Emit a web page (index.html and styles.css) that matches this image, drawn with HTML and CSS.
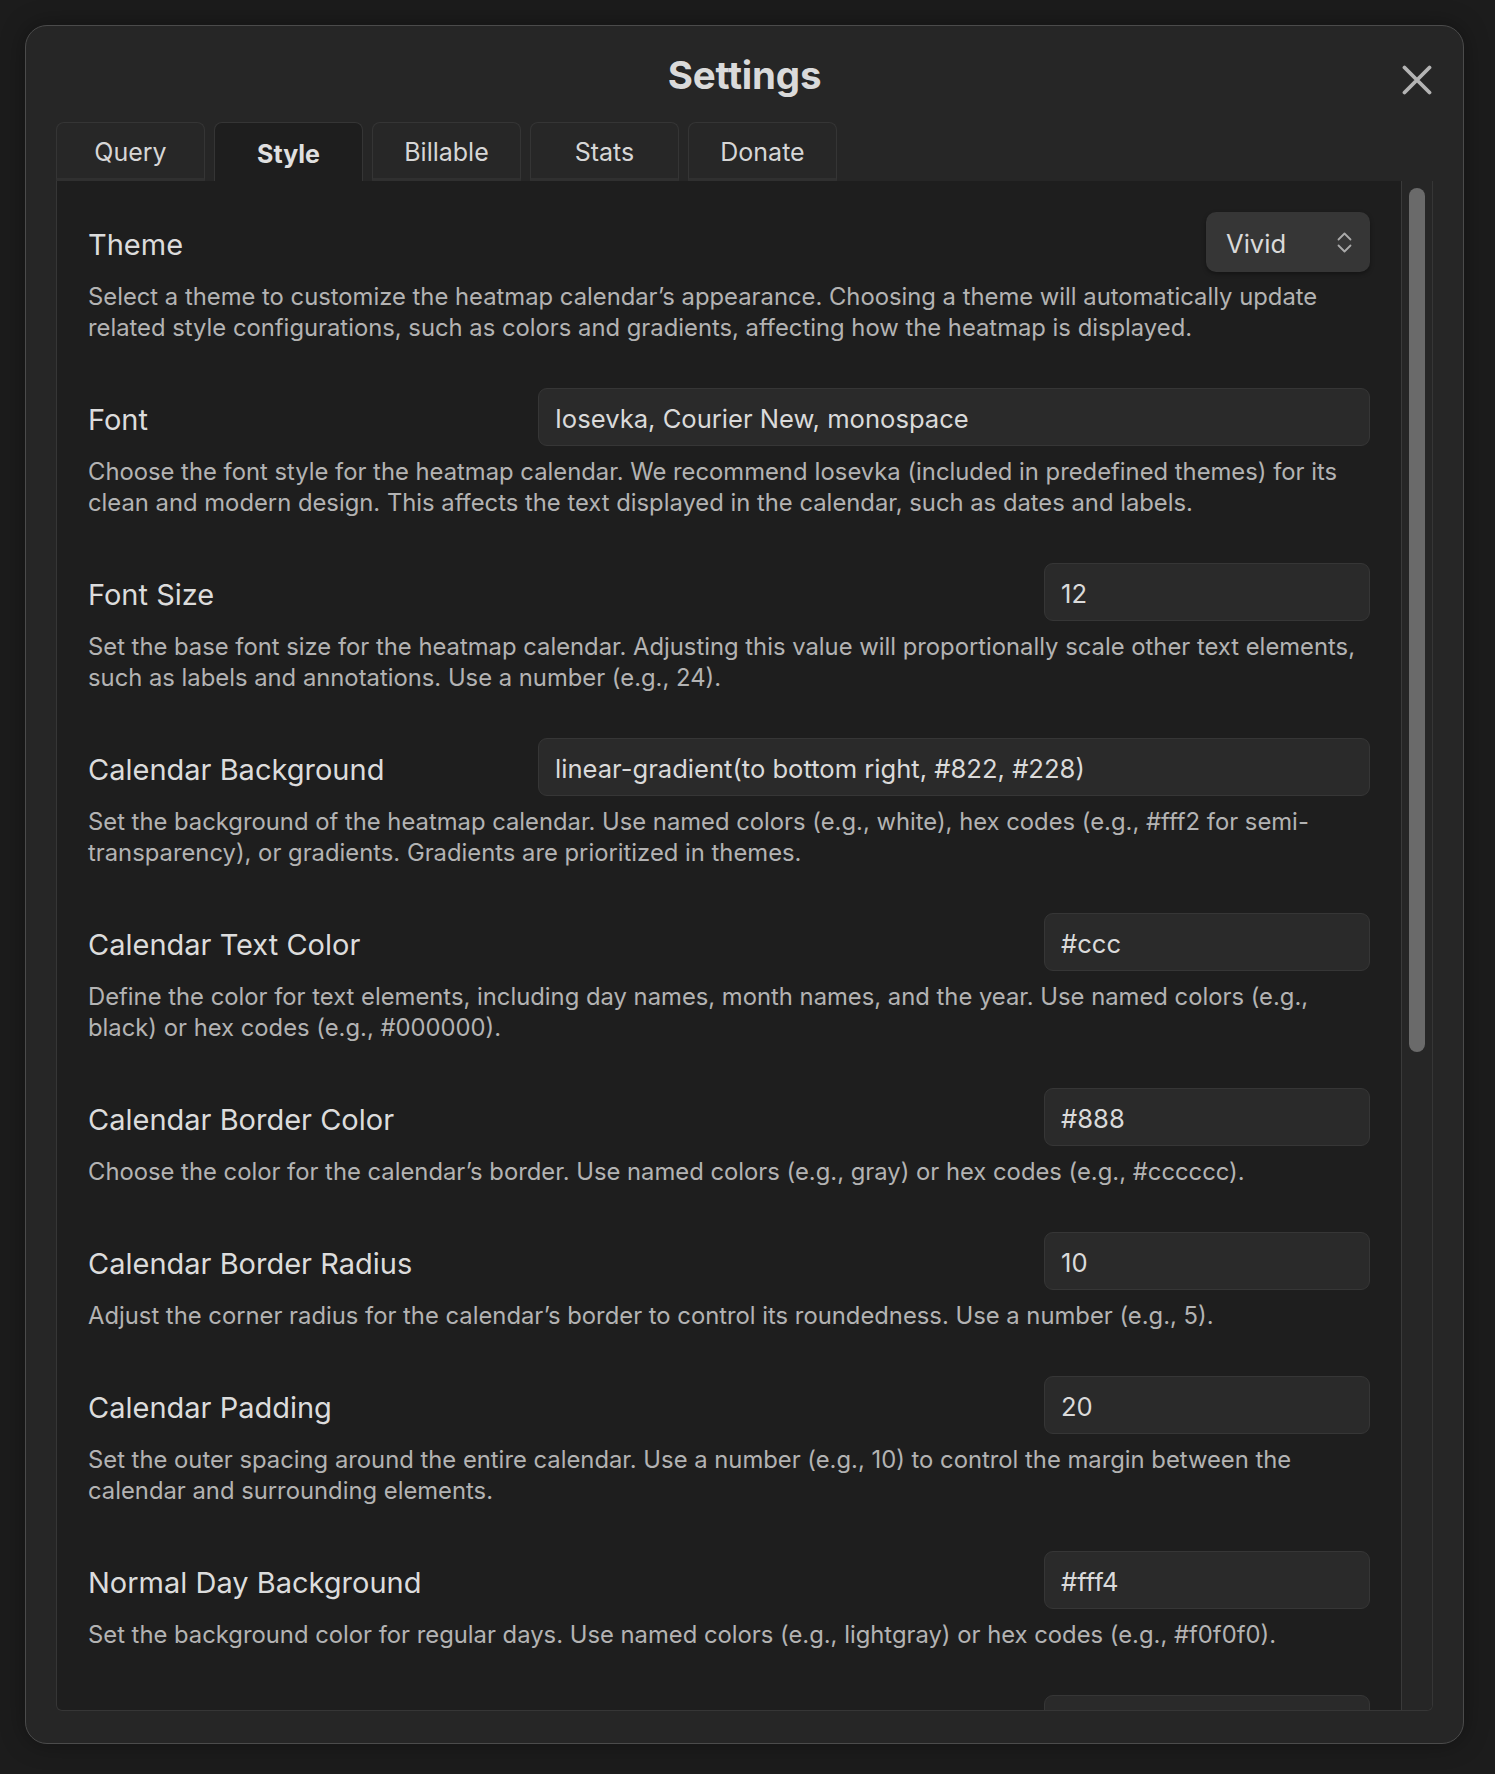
FILE: index.html
```html
<!DOCTYPE html>
<html lang="en">
<head>
<meta charset="utf-8">
<title>Settings</title>
<link rel="stylesheet" href="styles.css">
</head>
<body>
<div class="page">
  <div class="modal">
    <div class="modal-header">
      <div></div>
      <h1 class="modal-title">Settings</h1>
      <button class="close" aria-label="Close">
        <svg width="30" height="30" viewBox="0 0 30 30"><path d="M2.5 2.5 L27.5 27.5 M27.5 2.5 L2.5 27.5" stroke="#b4b4b4" stroke-width="3.8" stroke-linecap="round" fill="none"/></svg>
      </button>
    </div>
    <div class="tabs">
      <div class="tab">Query</div>
      <div class="tab active">Style</div>
      <div class="tab">Billable</div>
      <div class="tab">Stats</div>
      <div class="tab">Donate</div>
    </div>
    <div class="panel">
      <div class="panel-content">
        <div class="setting">
          <div class="setting-row">
            <div class="setting-name">Theme</div>
            <div class="dropdown">
              <span>Vivid</span>
              <svg width="15" height="21" viewBox="0 0 15 21"><path d="M1.5 7.5 L7.5 1.5 L13.5 7.5 M1.5 13.5 L7.5 19.5 L13.5 13.5" stroke="#aaaaaa" stroke-width="1.8" fill="none" stroke-linecap="round" stroke-linejoin="round"/></svg>
            </div>
          </div>
          <div class="setting-desc">Select a theme to customize the heatmap calendar’s appearance. Choosing a theme will automatically update related style configurations, such as colors and gradients, affecting how the heatmap is displayed.</div>
        </div>

        <div class="setting">
          <div class="setting-row">
            <div class="setting-name">Font</div>
            <input class="text-input wide" type="text" value="Iosevka, Courier New, monospace">
          </div>
          <div class="setting-desc">Choose the font style for the heatmap calendar. We recommend Iosevka (included in predefined themes) for its clean and modern design. This affects the text displayed in the calendar, such as dates and labels.</div>
        </div>

        <div class="setting">
          <div class="setting-row">
            <div class="setting-name">Font Size</div>
            <input class="text-input" type="text" value="12">
          </div>
          <div class="setting-desc">Set the base font size for the heatmap calendar. Adjusting this value will proportionally scale other text elements, such as labels and annotations. Use a number (e.g., 24).</div>
        </div>

        <div class="setting">
          <div class="setting-row">
            <div class="setting-name">Calendar Background</div>
            <input class="text-input wide" type="text" value="linear-gradient(to bottom right, #822, #228)">
          </div>
          <div class="setting-desc">Set the background of the heatmap calendar. Use named colors (e.g., white), hex codes (e.g., #fff2 for semi-transparency), or gradients. Gradients are prioritized in themes.</div>
        </div>

        <div class="setting">
          <div class="setting-row">
            <div class="setting-name">Calendar Text Color</div>
            <input class="text-input" type="text" value="#ccc">
          </div>
          <div class="setting-desc">Define the color for text elements, including day names, month names, and the year. Use named colors (e.g., black) or hex codes (e.g., #000000).</div>
        </div>

        <div class="setting">
          <div class="setting-row">
            <div class="setting-name">Calendar Border Color</div>
            <input class="text-input" type="text" value="#888">
          </div>
          <div class="setting-desc">Choose the color for the calendar’s border. Use named colors (e.g., gray) or hex codes (e.g., #cccccc).</div>
        </div>

        <div class="setting">
          <div class="setting-row">
            <div class="setting-name">Calendar Border Radius</div>
            <input class="text-input" type="text" value="10">
          </div>
          <div class="setting-desc">Adjust the corner radius for the calendar’s border to control its roundedness. Use a number (e.g., 5).</div>
        </div>

        <div class="setting">
          <div class="setting-row">
            <div class="setting-name">Calendar Padding</div>
            <input class="text-input" type="text" value="20">
          </div>
          <div class="setting-desc">Set the outer spacing around the entire calendar. Use a number (e.g., 10) to control the margin between the calendar and surrounding elements.</div>
        </div>

        <div class="setting">
          <div class="setting-row">
            <div class="setting-name">Normal Day Background</div>
            <input class="text-input" type="text" value="#fff4">
          </div>
          <div class="setting-desc">Set the background color for regular days. Use named colors (e.g., lightgray) or hex codes (e.g., #f0f0f0).</div>
        </div>

        <div class="setting">
          <div class="setting-row">
            <div class="setting-name"></div>
            <input class="text-input" type="text" value="">
          </div>
        </div>
      </div>
      <div class="scrollbar"><div class="thumb"></div></div>
    </div>
  </div>
</div>
</body>
</html>
```

FILE: styles.css
```css
* { box-sizing: border-box; }

html, body {
  margin: 0;
  padding: 0;
  background: #1c1c1c;
  font-family: Inter, "Liberation Sans", sans-serif;
  color: #dadada;
}

.page {
  height: 1774px;
  padding: 25px 31px 30px 25px;
}

.modal {
  height: 1719px;
  display: flex;
  flex-direction: column;
  background: #262626;
  border: 1px solid #4b4b4b;
  border-radius: 22px;
  padding: 0 30px 32px 30px;
  box-shadow: 0 0 24px rgba(0, 0, 0, 0.35);
}

.modal-header {
  display: grid;
  grid-template-columns: 1fr auto 1fr;
  height: 71px;
  padding-top: 27px;
  margin-bottom: 25px;
}

.modal-title {
  margin: 0;
  font-size: 38.5px;
  line-height: 44px;
  font-weight: 700;
  color: #dadada;
  letter-spacing: -0.2px;
}

.close {
  justify-self: end;
  align-self: start;
  margin-top: 12px;
  margin-right: 1px;
  width: 30px;
  height: 30px;
  padding: 0;
  border: none;
  background: none;
  display: flex;
}

.tabs {
  display: flex;
  gap: 9px;
  height: 59px;
}

.tab {
  width: 149px;
  height: 59px;
  display: flex;
  align-items: center;
  justify-content: center;
  font-size: 25px;
  color: #d6d6d6;
  background: #272727;
  border: 1px solid #353535;
  border-bottom: 3px solid #303030;
  border-radius: 8px 8px 0 0;
  padding-top: 2px;
}

.tab.active {
  background: #1e1e1e;
  border-bottom: none;
  font-weight: 700;
  color: #e0e0e0;
  padding-top: 4px;
}

.panel {
  flex: 1;
  min-height: 0;
  display: flex;
  background: #1e1e1e;
  border: 1px solid #363636;
  border-top: none;
  border-radius: 0 0 6px 6px;
  overflow: hidden;
}

.panel-content {
  flex: 1;
  min-width: 0;
  overflow: hidden;
  padding: 31px 31px 0 31px;
  display: flex;
  flex-direction: column;
  gap: 44px;
}

.setting-row {
  height: 60px;
  display: flex;
  align-items: center;
  justify-content: space-between;
}

.setting-name {
  font-size: 29px;
  color: #dcdcdc;
  white-space: nowrap;
  padding-top: 4px;
}

.text-input {
  width: 326px;
  height: 58px;
  background: #2a2a2a;
  border: 1px solid #363636;
  border-radius: 9px;
  padding: 2px 16px 0;
  font-family: inherit;
  font-size: 25.6px;
  color: #dadada;
  outline: none;
}

.text-input.wide {
  width: 832px;
}

.dropdown {
  width: 164px;
  height: 60px;
  display: flex;
  align-items: center;
  justify-content: space-between;
  padding: 0 18px 0 20px;
  background: #363636;
  border-radius: 10px;
  box-shadow: 0 2px 4px rgba(0, 0, 0, 0.35);
  font-size: 25.6px;
  color: #dadada;
}

.dropdown span { padding-top: 2px; }

.dropdown svg { display: block; }

.setting-desc {
  margin-top: 9px;
  font-size: 23.8px;
  line-height: 31px;
  color: #b3b3b3;
}

.scrollbar {
  width: 31px;
  flex: none;
  background: #262626;
  border-left: 1px solid #3a3a3a;
  padding: 7px 0 0 7px;
}

.thumb {
  width: 16px;
  height: 864px;
  border-radius: 8px;
  background: #6a6a6a;
}
```
